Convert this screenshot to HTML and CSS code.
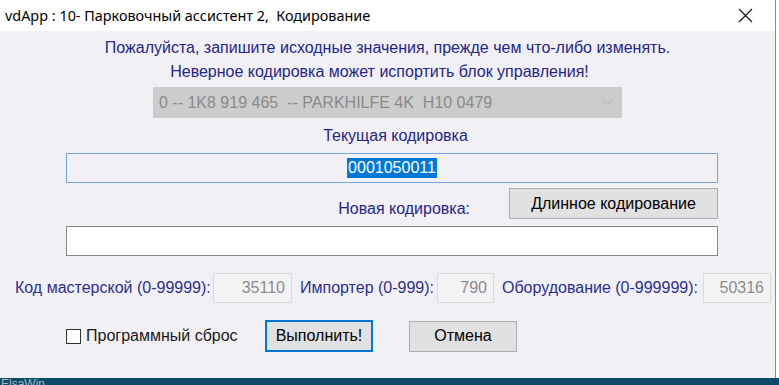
FILE: index.html
```html
<!DOCTYPE html>
<html lang="ru">
  <head>
    <meta charset="UTF-8" />
    <meta name="viewport" content="width=device-width, initial-scale=1.0" />
    <title>vdApp : 10- Парковочный ассистент 2, Кодирование</title>
    <link rel="stylesheet" href="styles.css">
  </head>
  <body>
    <div class="window">
      <!--
        Title bar
      -->
      <header class="titlebar">
        <span class="caption">vdApp : 10- Парковочный ассистент 2,&nbsp; Кодирование</span>
        <button class="close" type="button" aria-label="Закрыть">
          <svg width="15" height="15" viewBox="0 0 15 15" aria-hidden="true">
            <path d="M1 1 L14 14 M14 1 L1 14" stroke="#111" stroke-width="1.1" fill="none" />
          </svg>
        </button>
      </header>

      <!--
        Coding form
      -->
      <form class="client">
        <p class="note">Пожалуйста, запишите исходные значения, прежде чем что-либо изменять.</p>
        <p class="note second">Неверное кодировка может испортить блок управления!</p>

        <div class="select-row">
          <div class="select">
            <span>0 -- 1K8 919 465 &nbsp;-- PARKHILFE 4K &nbsp;H10 0479</span>
            <svg width="11" height="7" viewBox="0 0 11 7" aria-hidden="true">
              <path d="M1 1 L5.5 5.5 L10 1" stroke="#b4b4b4" stroke-width="1" fill="none" />
            </svg>
          </div>
        </div>

        <p class="caption-current">Текущая кодировка</p>
        <div class="code current"><span class="selected">0001050011</span></div>

        <div class="new-row">
          <span class="caption-new">Новая кодировка:</span>
          <button class="btn long" type="button">Длинное кодирование</button>
        </div>
        <div class="code new"></div>

        <div class="codes-row">
          <label class="field-label first">Код мастерской (0-99999):</label>
          <span class="num">35110</span>
          <label class="field-label">Импортер (0-999):</label>
          <span class="num">790</span>
          <label class="field-label">Оборудование (0-999999):</label>
          <span class="num">50316</span>
        </div>

        <div class="actions-row">
          <label class="check"><span class="box"></span>Программный сброс</label>
          <button class="btn run" type="button">Выполнить!</button>
          <button class="btn cancel" type="button">Отмена</button>
        </div>
      </form>
    </div>
    <div class="taskbar"><span>ElsaWin</span></div>
  </body>
</html>
```

FILE: styles.css
```css
/*
  Global styles
*/

:root {
  --navy: #262689;
  --face: #f0f0f5;
  --btn: #e1e1e1;
  --btn-border: #adadad;
  --focus: #0078d7;
}
* {
  margin: 0;
  padding: 0;
  box-sizing: border-box;
}
body {
  width: 779px;
  height: 385px;
  overflow: hidden;
  background-color: #fff;
  font-family: "Liberation Sans", Arial, sans-serif;
}

/*
  Window frame
*/

.window {
  width: 776px;
  height: 378px;
  border-right: 1px solid #8c8c8c;
  background-color: var(--face);
}
.titlebar {
  display: flex;
  align-items: center;
  justify-content: space-between;
  height: 31px;
  padding-left: 5px;
  background-color: #fff;
}
.caption {
  font-family: "Noto Sans", "Open Sans", sans-serif;
  font-size: 14.4px;
  color: #000;
}
.close {
  display: flex;
  align-items: center;
  justify-content: center;
  width: 46px;
  height: 31px;
  margin-right: 7px;
  border: none;
  background: none;
}
.taskbar {
  height: 7px;
  overflow: hidden;
  padding-left: 1px;
  background-color: #0e4b69;
}
.taskbar span {
  display: block;
  margin-top: 0;
  font-size: 12px;
  line-height: 12px;
  color: #9fb8c6;
}

/*
  Form
*/

.client {
  padding-top: 5px;
  font-family: "Liberation Sans Narrow", "Liberation Sans", sans-serif;
  font-size: 16px;
  color: var(--navy);
}
.note {
  line-height: 24px;
  text-align: center;
}
.note.second {
  padding-right: 16px;
}
.select-row {
  display: flex;
  justify-content: center;
  margin-top: 3px;
}
.select {
  display: flex;
  align-items: center;
  justify-content: space-between;
  width: 469px;
  height: 31px;
  padding: 0 9px 0 6px;
  background-color: #cccccc;
  color: #8a8a8a;
}
.caption-current {
  margin-top: 6px;
  padding-left: 16px;
  line-height: 24px;
  text-align: center;
}
.code {
  width: 652px;
  height: 30px;
  margin-left: 66px;
}
.code.current {
  display: flex;
  align-items: center;
  justify-content: center;
  margin-top: 5px;
  border: 1px solid #73a5dc;
}
.selected {
  padding: 0 1px;
  line-height: 20px;
  color: #fff;
  background-color: var(--focus);
}
.new-row {
  display: flex;
  justify-content: flex-end;
  height: 31px;
  margin: 5px 57px 0 0;
}
.caption-new {
  margin: 9px 39px 0 0;
  line-height: 24px;
}
.code.new {
  margin-top: 7px;
  border: 1px solid #868686;
  background-color: #fff;
}

/*
  Buttons
*/

.btn {
  height: 31px;
  border: 1px solid var(--btn-border);
  background-color: var(--btn);
  font-family: "Liberation Sans", sans-serif;
  font-size: 16px;
  color: #000;
}
.btn.long {
  width: 209px;
  font-family: "Liberation Sans Narrow", "Liberation Sans", sans-serif;
}
.btn.run {
  width: 108px;
  height: 32px;
  margin-left: 27px;
  border: 2px solid var(--focus);
}
.btn.cancel {
  width: 108px;
  margin-left: 36px;
}

/*
  Workshop / importer / equipment codes
*/

.codes-row {
  display: grid;
  grid-template-columns: 198px 79px 145px 57px 209px 68px;
  align-items: center;
  height: 30px;
  margin-top: 17px;
  padding-left: 15px;
  font-family: "Liberation Sans", sans-serif;
  font-size: 16px;
  color: #2d2f8e;
}
.field-label {
  padding-left: 8px;
  white-space: nowrap;
}
.field-label.first {
  padding-left: 0;
}
.num {
  height: 30px;
  padding-right: 6px;
  border: 1px solid #dadada;
  line-height: 28px;
  text-align: right;
  color: #8c8c8c;
  background-color: #f3f3f5;
}

/*
  Bottom actions
*/

.actions-row {
  display: flex;
  align-items: center;
  height: 32px;
  margin-top: 17px;
  padding-left: 66px;
}
.check {
  display: flex;
  align-items: center;
  width: 172px;
  font-family: "Liberation Sans", sans-serif;
  font-size: 16px;
  color: #1a1a1a;
}
.box {
  width: 15px;
  height: 15px;
  margin-right: 5px;
  border: 1px solid #333;
  background-color: #fff;
}
```
